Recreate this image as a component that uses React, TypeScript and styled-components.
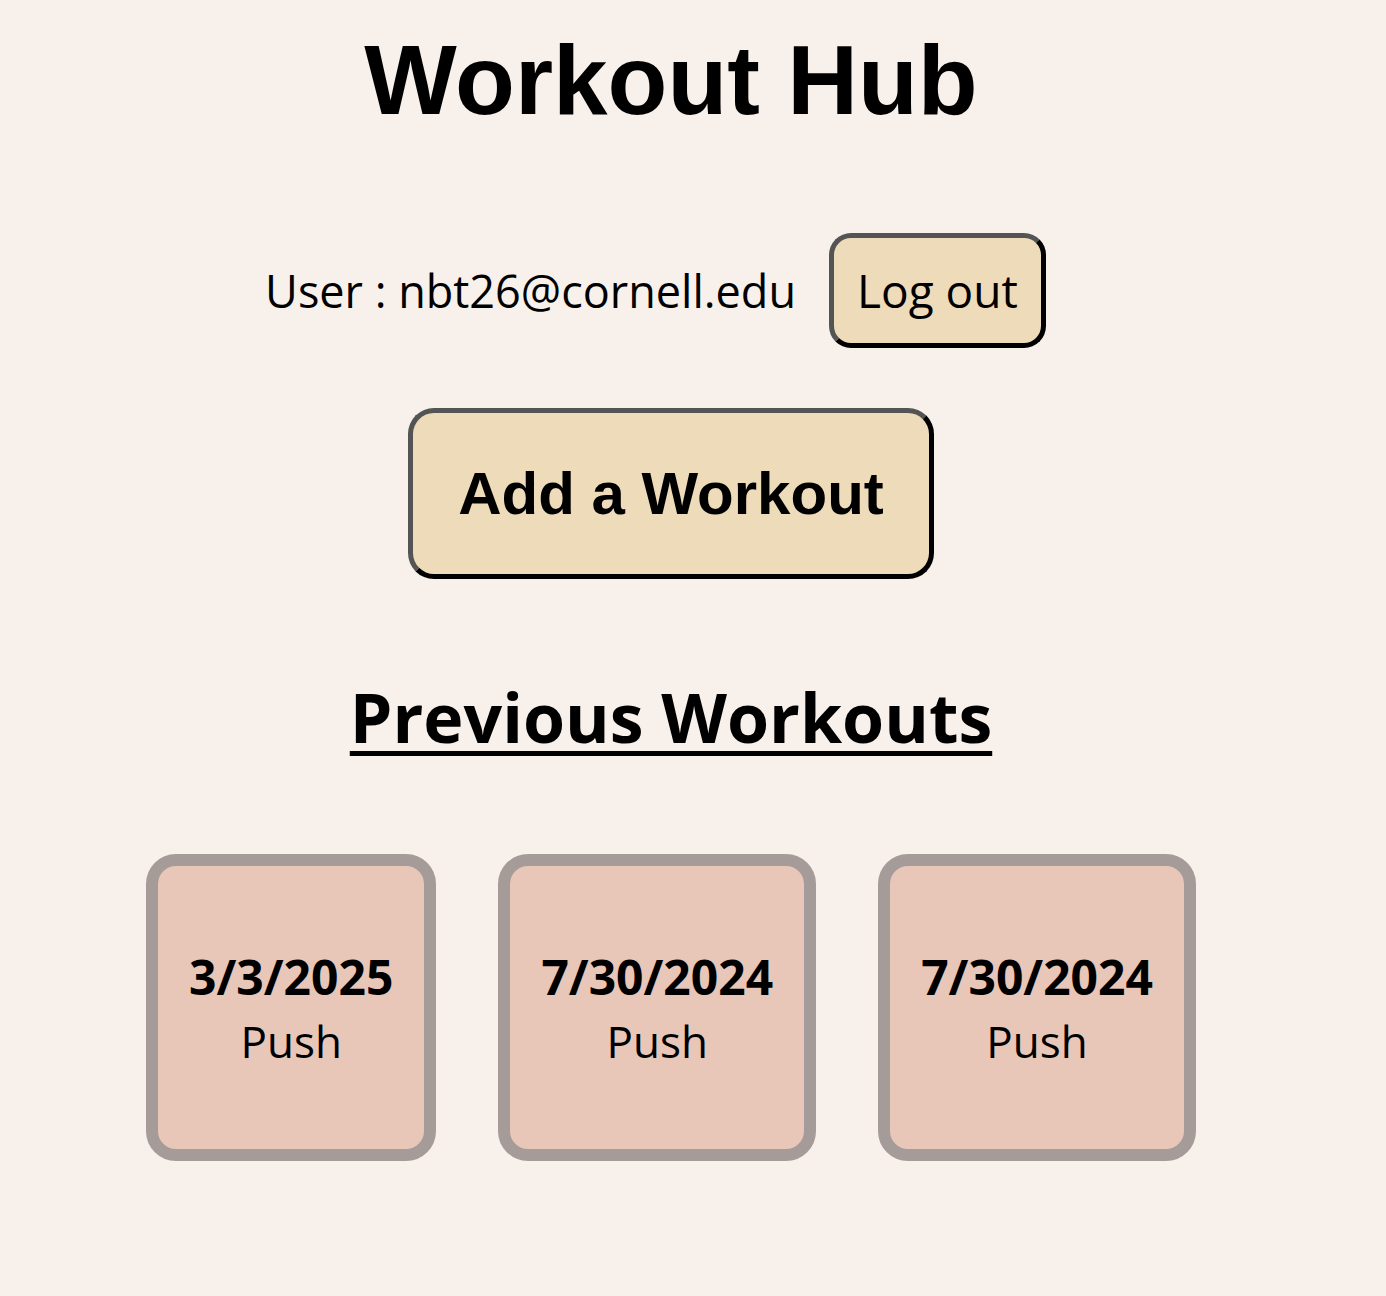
import React from "react";
import styled, {createGlobalStyle} from "styled-components";

type Workout = {
    date: string
    name: string
}

const workouts: Workout[] = [
    {date: "3/3/2025", name: "Push"},
    {date: "7/30/2024", name: "Push"},
    {date: "7/30/2024", name: "Push"},
];

const GlobalStyle = createGlobalStyle`
  html, body {
    background: #f8f0eb;
  }
  body {
    margin: 8px;
    font-family: "Open Sans", "Noto Sans", sans-serif;
    color: #000;
  }
`

const Page = styled.main`
  display: flex;
  flex-direction: column;
  align-items: center;
  padding-right: 44px;
`

const Title = styled.h1`
  margin: 17px 0 0;
  font-family: "Liberation Sans", Arial, sans-serif;
  font-size: 98px;
  font-weight: 700;
  line-height: 110px;
`

const UserRow = styled.div`
  display: flex;
  align-items: center;
  margin-top: 98px;
`

const UserText = styled.span`
  font-size: 45px;
`

const Button = styled.button`
  background: #eddbba;
  border: 5px solid;
  border-color: #545454 #000 #000 #545454;
  color: #000;
  cursor: pointer;
`

const LogoutButton = styled(Button)`
  margin: 0 31px 0 33px;
  padding: 20px 23px;
  border-radius: 22px;
  font-family: inherit;
  font-size: 46px;
  line-height: 65px;
`

const AddButton = styled(Button)`
  margin-top: 60px;
  padding: 46px 45px;
  border-radius: 26px;
  font-family: "Liberation Sans", Arial, sans-serif;
  font-size: 60px;
  font-weight: 700;
  line-height: 69px;
`

const SectionTitle = styled.h2`
  margin: 89px 0 0;
  font-size: 68px;
  font-weight: 700;
  line-height: 98px;
  text-decoration: underline;
  text-decoration-thickness: 5px;
  text-underline-offset: 8px;
`

const CardRow = styled.div`
  display: flex;
  justify-content: center;
  gap: 62px;
  margin-top: 88px;
`

const Card = styled.div`
  display: flex;
  flex-direction: column;
  justify-content: center;
  align-items: center;
  height: 307px;
  box-sizing: border-box;
  padding: 2px 31px 0;
  background: #e8c6b8;
  border: 12px solid #a59b99;
  border-radius: 30px;
  line-height: 64px;
`

const CardDate = styled.b`
  font-size: 48px;
  font-weight: 700;
`

const CardName = styled.span`
  font-size: 44px;
`

export default function App() {
    return (
        <>
            <GlobalStyle/>
            <Page>
                <Title>Workout Hub</Title>
                <UserRow>
                    <UserText>User : nbt26@cornell.edu</UserText>
                    <LogoutButton>Log out</LogoutButton>
                </UserRow>
                <AddButton>Add a Workout</AddButton>
                <SectionTitle>Previous Workouts</SectionTitle>
                <CardRow>
                    {workouts.map((w, i) => (
                        <Card key={i}>
                            <CardDate>{w.date}</CardDate>
                            <CardName>{w.name}</CardName>
                        </Card>
                    ))}
                </CardRow>
            </Page>
        </>
    );
}
